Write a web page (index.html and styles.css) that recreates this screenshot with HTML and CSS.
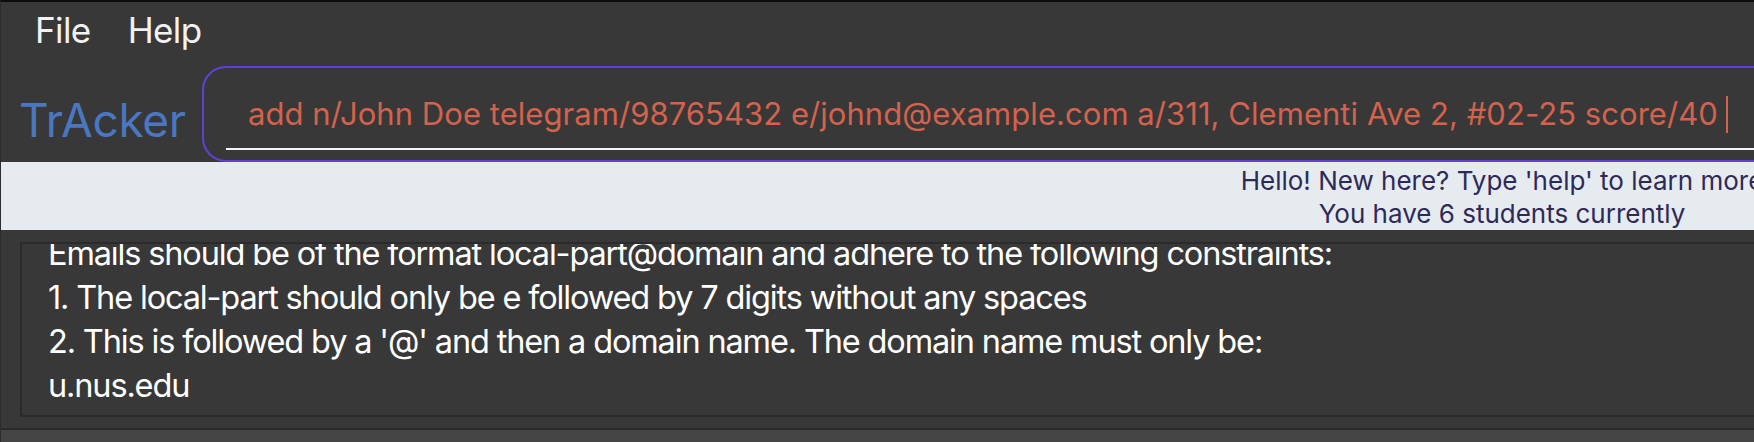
FILE: index.html
```html
<!DOCTYPE html>
<html lang="en">
<head>
<meta charset="utf-8">
<title>TrAcker</title>
<link rel="stylesheet" href="styles.css">
</head>
<body>
<div class="app">
  <div class="menubar">
    <span class="menu-item">File</span>
    <span class="menu-item">Help</span>
  </div>
  <div class="command-row">
    <div class="brand">TrAcker</div>
    <div class="command-box">
      <div class="command-field"><span class="cmd-text">add n/John Doe telegram/98765432 e/johnd@example.com a/311, Clementi Ave 2, #02-25 score/40</span><span class="caret"></span></div>
    </div>
  </div>
  <div class="status">
    <div class="status-text">Hello! New here? Type 'help' to learn more<br>You have 6 students currently</div>
  </div>
  <div class="result-pane">
    <div class="result-box">
      <div class="result-text">Emails should be of the format local-part@domain and adhere to the following constraints:<br>1. The local-part should only be e followed by 7 digits without any spaces<br>2. This is followed by a '@' and then a domain name. The domain name must only be:<br>u.nus.edu</div>
    </div>
  </div>
  <div class="footer"></div>
</div>
</body>
</html>
```
FILE: styles.css
```css
html, body {
  margin: 0;
  padding: 0;
  background: #383838;
  overflow: hidden;
}
body {
  width: 1754px;
  height: 442px;
  font-family: Inter, "Noto Sans", sans-serif;
}
.app {
  width: 1820px;
  border-top: 2px solid #0d0d0d;
  border-left: 1px solid #2c2c2c;
  background: #383838;
}
.menubar {
  height: 58px;
  display: flex;
  align-items: flex-start;
  padding-top: 2px;
  box-sizing: border-box;
  padding-left: 34px;
  gap: 37px;
}
.menu-item {
  color: #f2f2f2;
  font-size: 35px;
  line-height: 52px;
  letter-spacing: -0.6px;
}
.command-row {
  display: flex;
  align-items: flex-start;
  padding-top: 6px;
  height: 102px;
  box-sizing: border-box;
}
.brand {
  width: 201px;
  box-sizing: border-box;
  padding-left: 18px;
  margin-top: 27px;
  color: #4a77c2;
  font-size: 46px;
  line-height: 55px;
  letter-spacing: -0.3px;
}
.command-box {
  flex: 1;
  height: 96px;
  box-sizing: border-box;
  border: 2px solid #6240d8;
  border-radius: 24px;
  padding: 24px 0 10px 22px;
}
.command-field {
  border-bottom: 2px solid #f4f4f4;
  padding-left: 22px;
  padding-bottom: 12px;
  white-space: nowrap;
  line-height: 44px;
  height: 44px;
}
.cmd-text {
  color: #d4624c;
  font-size: 31px;
  letter-spacing: 0.05px;
}
.caret {
  display: inline-block;
  width: 2px;
  height: 37px;
  background: #d4624c;
  margin-left: 8px;
  vertical-align: -8px;
}
.status {
  height: 68px;
  box-sizing: border-box;
  padding-top: 2px;
  background: #e6ebf0;
  display: flex;
  justify-content: flex-end;
  padding-right: 19px;
}
.status-text {
  width: 600px;
  text-align: center;
  color: #2e2a58;
  font-size: 26px;
  line-height: 33px;
  letter-spacing: 0;
  white-space: nowrap;
}
.result-pane {
  padding: 12px 0 11px 19px;
  border-bottom: 2px solid #2a2a2a;
}
.result-box {
  height: 175px;
  box-sizing: border-box;
  border: 2px solid #2b2b2b;
  border-right: none;
  overflow: hidden;
  padding-left: 26px;
}
.result-text {
  margin-top: -12px;
  color: #ffffff;
  font-size: 32.5px;
  line-height: 44px;
  letter-spacing: -1.15px;
  white-space: nowrap;
}
.footer {
  height: 20px;
  background: #454545;
}
```
